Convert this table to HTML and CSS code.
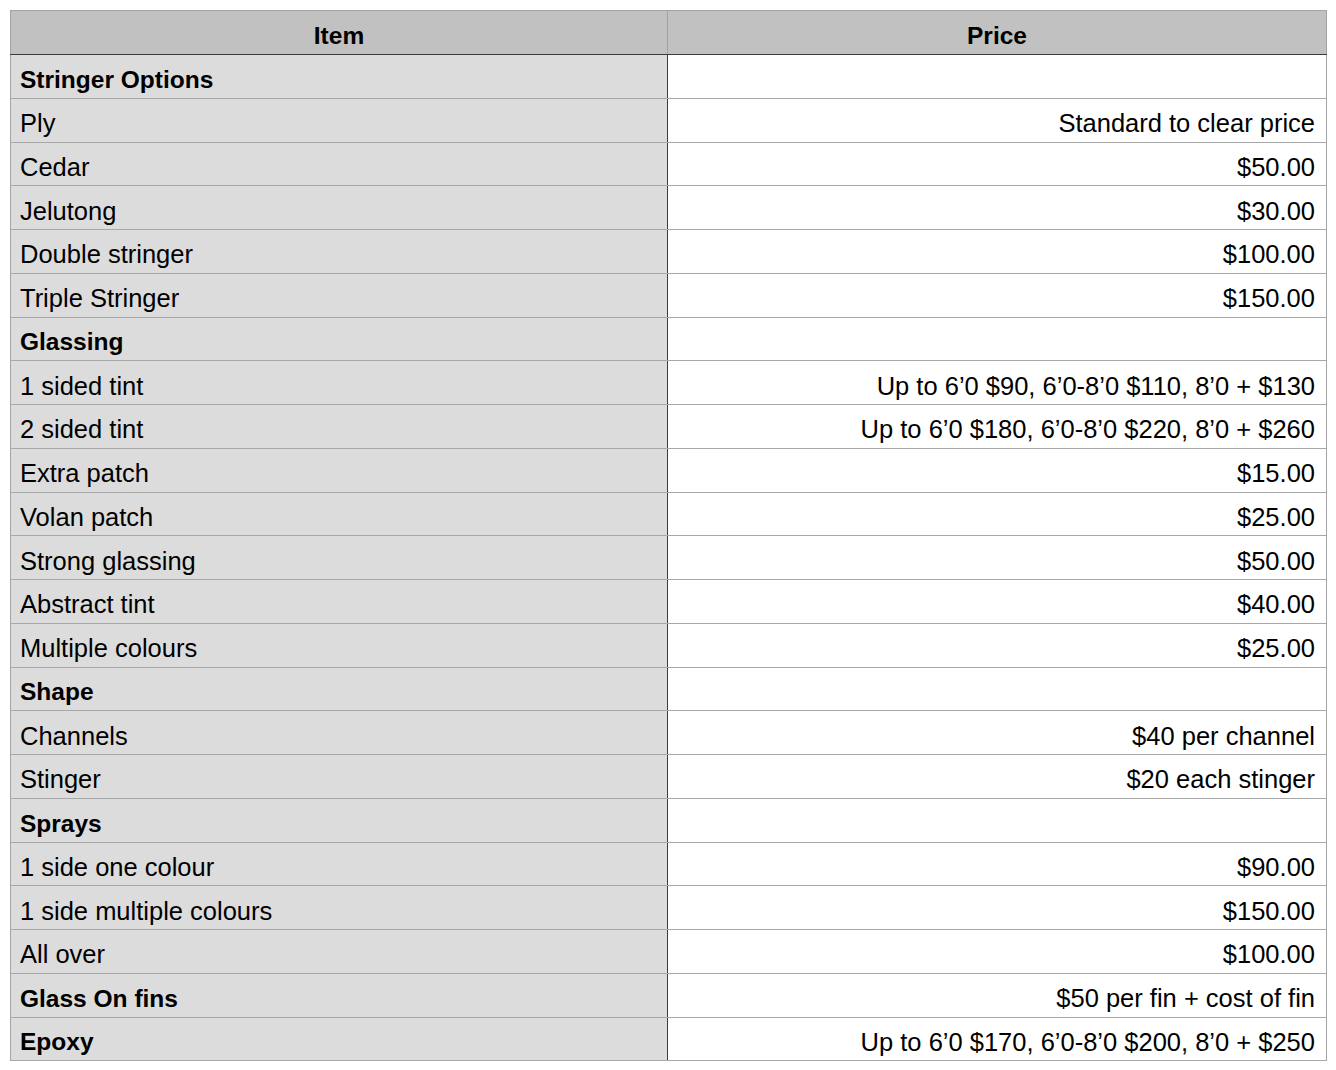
FILE: index.html
```html
<!DOCTYPE html>
<html>
<head>
<meta charset="utf-8">
<link rel="stylesheet" href="styles.css">
</head>
<body>
<table class="price-table">
  <colgroup><col class="col-item"><col class="col-price"></colgroup>
  <thead>
    <tr><th>Item</th><th>Price</th></tr>
  </thead>
  <tbody>
    <tr><td class="group">Stringer Options</td><td></td></tr>
    <tr><td>Ply</td><td>Standard to clear price</td></tr>
    <tr><td>Cedar</td><td>$50.00</td></tr>
    <tr><td>Jelutong</td><td>$30.00</td></tr>
    <tr><td>Double stringer</td><td>$100.00</td></tr>
    <tr><td>Triple Stringer</td><td>$150.00</td></tr>
    <tr><td class="group">Glassing</td><td></td></tr>
    <tr><td>1 sided tint</td><td>Up to 6’0 $90, 6’0-8’0 $110, 8’0 + $130</td></tr>
    <tr><td>2 sided tint</td><td>Up to 6’0 $180, 6’0-8’0 $220, 8’0 + $260</td></tr>
    <tr><td>Extra patch</td><td>$15.00</td></tr>
    <tr><td>Volan patch</td><td>$25.00</td></tr>
    <tr><td>Strong glassing</td><td>$50.00</td></tr>
    <tr><td>Abstract tint</td><td>$40.00</td></tr>
    <tr><td>Multiple colours</td><td>$25.00</td></tr>
    <tr><td class="group">Shape</td><td></td></tr>
    <tr><td>Channels</td><td>$40 per channel</td></tr>
    <tr><td>Stinger</td><td>$20 each stinger</td></tr>
    <tr><td class="group">Sprays</td><td></td></tr>
    <tr><td>1 side one colour</td><td>$90.00</td></tr>
    <tr><td>1 side multiple colours</td><td>$150.00</td></tr>
    <tr><td>All over</td><td>$100.00</td></tr>
    <tr><td class="group">Glass On fins</td><td>$50 per fin + cost of fin</td></tr>
    <tr><td class="group">Epoxy</td><td>Up to 6’0 $170, 6’0-8’0 $200, 8’0 + $250</td></tr>
  </tbody>
</table>
</body>
</html>
```
FILE: styles.css
```css
html, body {
  margin: 0;
  padding: 0;
  background: #ffffff;
}
body {
  padding: 10px 0 0 10px;
  font-family: "Liberation Sans", Arial, sans-serif;
  color: #000;
}
.price-table {
  border-collapse: collapse;
  table-layout: fixed;
  width: 1316px;
  border: 1px solid #a3a3a3;
  font-size: 25.5px;
}
.col-item { width: 657px; }
.col-price { width: 659px; }
.price-table th {
  background: #c0c1c0;
  font-weight: bold;
  font-size: 24.5px;
  text-align: center;
  height: 44px;
  padding: 7px 0 0 0;
  box-sizing: border-box;
  border-bottom: 1px solid #3d3d3d;
  border-left: 1px solid #a3a3a3;
}
.price-table td {
  height: 43.75px;
  box-sizing: border-box;
  padding: 7px 11px 0 9px;
  border-bottom: 1px solid #a8a8a8;
  white-space: nowrap;
  vertical-align: middle;
}
.price-table td:first-child {
  background: #dcdcdc;
  text-align: left;
  border-right: 1px solid #3d3d3d;
}
.price-table td:last-child {
  background: #ffffff;
  text-align: right;
}
.price-table td.group {
  font-weight: bold;
  font-size: 24.5px;
}
```
